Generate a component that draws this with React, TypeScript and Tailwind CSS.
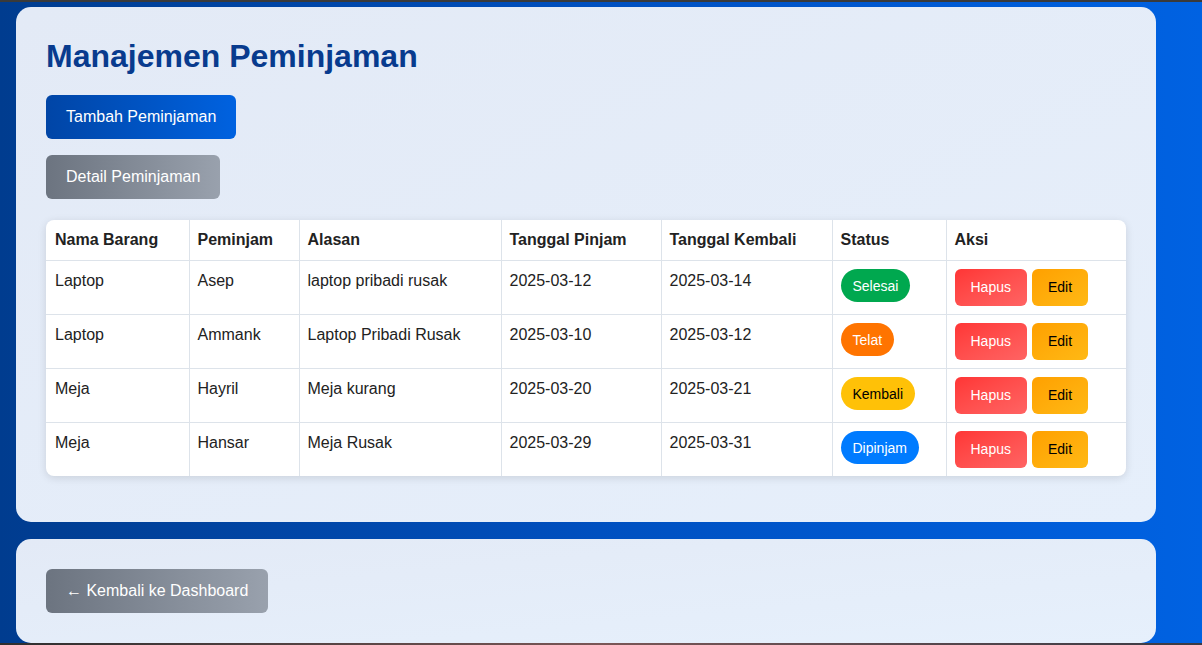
import React from "react";

type Row = {
  barang: string;
  peminjam: string;
  alasan: string;
  pinjam: string;
  kembali: string;
  status: "Selesai" | "Telat" | "Kembali" | "Dipinjam";
};

const rows: Row[] = [
  { barang: "Laptop", peminjam: "Asep", alasan: "laptop pribadi rusak", pinjam: "2025-03-12", kembali: "2025-03-14", status: "Selesai" },
  { barang: "Laptop", peminjam: "Ammank", alasan: "Laptop Pribadi Rusak", pinjam: "2025-03-10", kembali: "2025-03-12", status: "Telat" },
  { barang: "Meja", peminjam: "Hayril", alasan: "Meja kurang", pinjam: "2025-03-20", kembali: "2025-03-21", status: "Kembali" },
  { barang: "Meja", peminjam: "Hansar", alasan: "Meja Rusak", pinjam: "2025-03-29", kembali: "2025-03-31", status: "Dipinjam" },
];

function Badge({ status }: { status: Row["status"] }) {
  const cls =
    status === "Selesai"
      ? "bg-[#00a84f] text-white"
      : status === "Telat"
      ? "bg-[#ff7400] text-white"
      : status === "Kembali"
      ? "bg-[#ffc107] text-black"
      : "bg-[#007bff] text-white";
  return (
    <span className={`inline-flex h-[33px] items-center rounded-full px-3 text-[14px] ${cls}`}>
      {status}
    </span>
  );
}

export default function App() {
  const th = "border-b border-r border-[#dde3ea] px-2 py-2 text-left font-bold leading-6 text-[#222]";
  const td = "border-r border-[#dde3ea] px-2 py-2 align-top leading-6 text-[#222]";
  return (
    <div
      className="flex h-[645px] w-full flex-col overflow-hidden"
      style={{ fontFamily: '"Liberation Sans", Arial, sans-serif' }}
    >
      <div className="h-[2px] shrink-0 bg-[#3a3a3a]" />
      <div className="flex flex-1 flex-col gap-[17px] bg-gradient-to-r from-[#003c8f] via-[#0050c0] to-[#0062e2] px-4 pt-[5px]">
        <div className="w-[1140px] shrink-0 rounded-[15px] bg-gradient-to-br from-[#e3eaf6] to-[#e6effb] px-[30px] pb-[46px] pt-[31px]">
          <h1 className="text-[32px] font-bold leading-[37px] text-[#083b8e]">Manajemen Peminjaman</h1>
          <div className="mt-5 flex flex-col items-start gap-4">
            <button className="h-11 rounded-md bg-gradient-to-r from-[#0045a6] to-[#0062e0] px-5 text-[16px] text-white">
              Tambah Peminjaman
            </button>
            <button className="h-11 rounded-md bg-gradient-to-r from-[#6c7480] to-[#99a1ad] px-5 text-[16px] text-white">
              Detail Peminjaman
            </button>
          </div>
          <div className="mt-[21px] w-[1080px] overflow-hidden rounded-lg bg-white shadow-[0_2px_8px_rgba(0,0,0,0.12)]">
            <table className="w-full table-fixed border-collapse text-[16px]">
              <thead>
                <tr>
                  <th className={`${th} w-[143px] pl-[9px]`}>Nama Barang</th>
                  <th className={`${th} w-[110px]`}>Peminjam</th>
                  <th className={`${th} w-[202px]`}>Alasan</th>
                  <th className={`${th} w-[160px]`}>Tanggal Pinjam</th>
                  <th className={`${th} w-[171px]`}>Tanggal Kembali</th>
                  <th className={`${th} w-[114px]`}>Status</th>
                  <th className="border-b border-[#dde3ea] px-2 py-2 text-left font-bold leading-6 text-[#222]">Aksi</th>
                </tr>
              </thead>
              <tbody>
                {rows.map((r, i) => (
                  <tr key={i} className={i < rows.length - 1 ? "border-b border-[#dde3ea]" : ""}>
                    <td className={`${td} pl-[9px]`}>{r.barang}</td>
                    <td className={td}>{r.peminjam}</td>
                    <td className={td}>{r.alasan}</td>
                    <td className={td}>{r.pinjam}</td>
                    <td className={td}>{r.kembali}</td>
                    <td className={td}>
                      <Badge status={r.status} />
                    </td>
                    <td className="px-2 py-2 align-top">
                      <div className="flex gap-[5px]">
                        <button className="h-[37px] rounded-md bg-gradient-to-br from-[#ff3535] to-[#ff6363] px-4 text-[14px] text-white">
                          Hapus
                        </button>
                        <button className="h-[37px] rounded-md bg-gradient-to-br from-[#ffa000] to-[#ffb914] px-4 text-[14px] text-black">
                          Edit
                        </button>
                      </div>
                    </td>
                  </tr>
                ))}
              </tbody>
            </table>
          </div>
        </div>
        <div className="w-[1140px] shrink-0 rounded-[15px] bg-gradient-to-br from-[#e3eaf6] to-[#e6f0fc] px-[30px] pb-[30px] pt-[30px]">
          <button className="h-11 rounded-md bg-gradient-to-r from-[#6c7480] to-[#99a1ad] px-5 text-[16px] text-white">
            ← Kembali ke Dashboard
          </button>
        </div>
      </div>
      <div className="h-[2px] shrink-0 bg-gradient-to-r from-[#2e2e2e] via-[#7a5656] to-[#3a3a44]" />
    </div>
  );
}
